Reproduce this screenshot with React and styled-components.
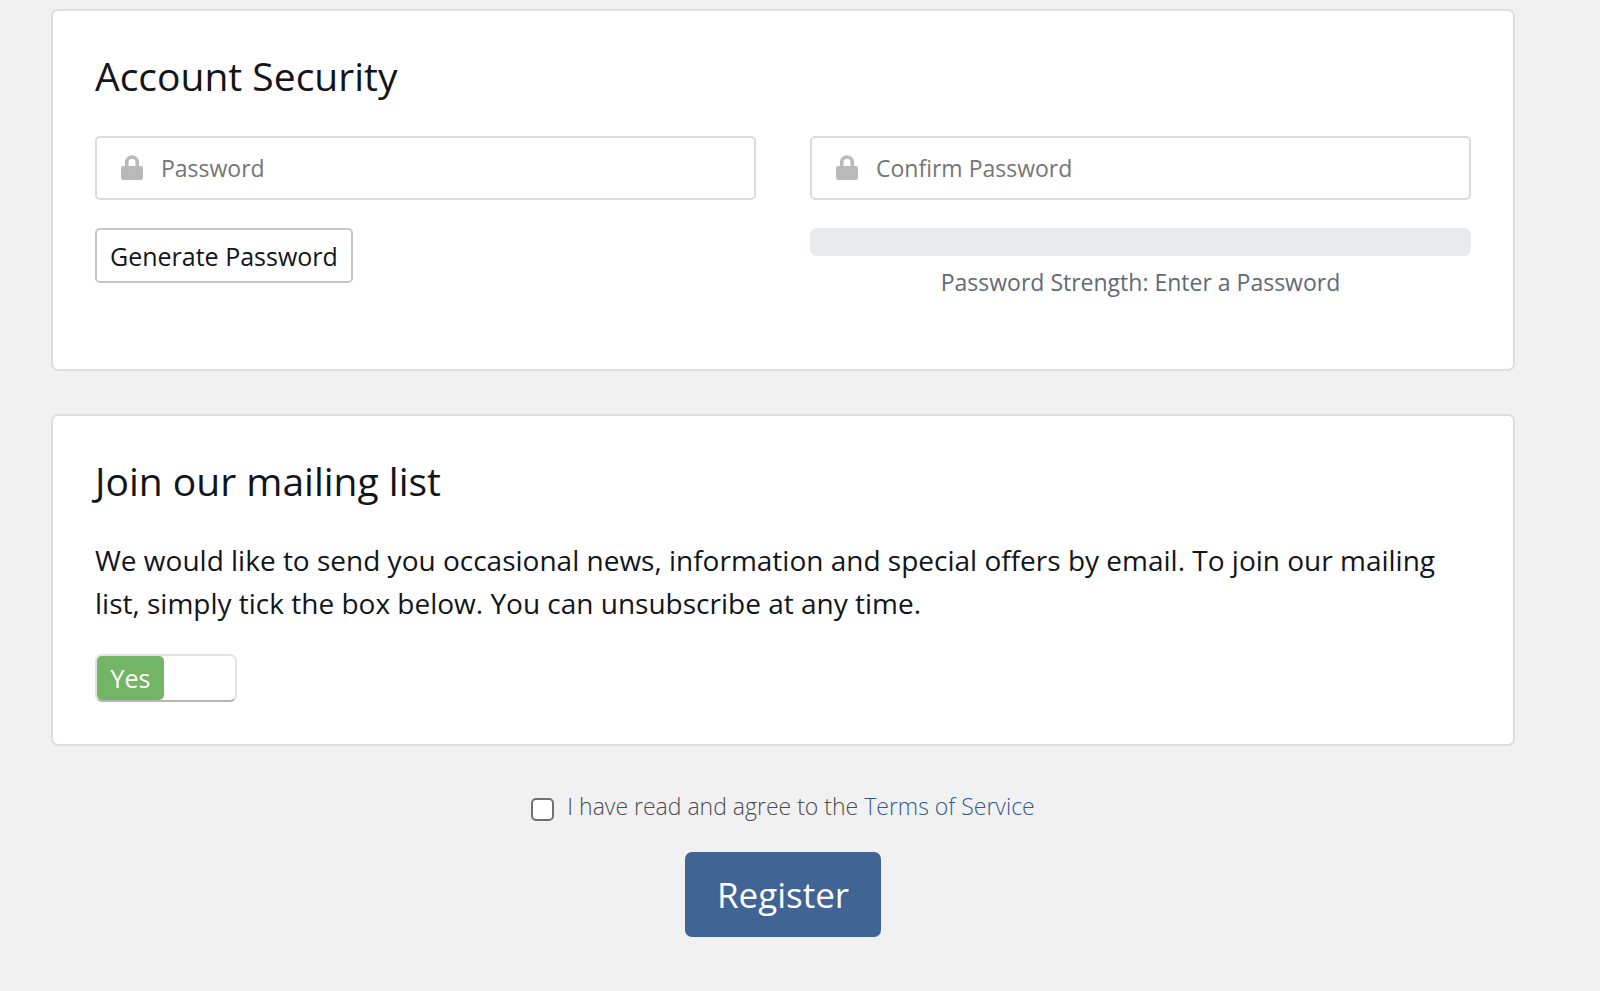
import React, { useState } from 'react';
import styled, { createGlobalStyle } from 'styled-components';

const GlobalStyle = createGlobalStyle`
  * {
    box-sizing: border-box;
  }

  body {
    margin: 0;
    background-color: #f1f1f1;
    color: #12151a;
    font-family: "Open Sans", "Noto Sans", sans-serif;
    font-size: 23px;
  }
`;

const Page = styled.form`
  padding: 9px 85px 52px 51px;
`;

const Card = styled.section`
  margin-bottom: 43px;
  padding: 42px 42px ${({ $bottom }) => $bottom};
  background-color: #fff;
  border: 2px solid #dedede;
  border-radius: 7px;
`;

const Title = styled.h2`
  margin: 0 0 35px;
  font-size: 39px;
  font-weight: 400;
  line-height: 46px;
`;

const Columns = styled.div`
  display: grid;
  grid-template-columns: 1fr 1fr;
  column-gap: 54px;
  row-gap: 28px;
  align-items: start;
  justify-items: start;
  padding-top: 2px;
`;

const Field = styled.label`
  display: flex;
  align-items: center;
  width: 100%;
  height: 64px;
  padding: 0 24px;
  border: 2px solid #dcdcdc;
  border-radius: 5px;
`;

const LockIcon = styled.svg`
  flex: none;
  width: 22px;
  height: 26px;
  margin-right: 18px;
  fill: #b9b9b9;
`;

const FieldInput = styled.input`
  flex: 1;
  min-width: 0;
  padding: 0;
  border: 0;
  outline: 0;
  background: transparent;
  color: #12151a;
  font: inherit;

  &::placeholder {
    color: #757575;
    opacity: 1;
  }
`;

const GenerateButton = styled.button`
  height: 55px;
  padding: 0 13px;
  background-color: #fff;
  border: 2px solid #c6c6c6;
  border-radius: 5px;
  color: #12151a;
  font-family: inherit;
  font-size: 25px;
  cursor: pointer;
`;

const Strength = styled.div`
  width: 100%;
  color: #626a73;
  text-align: center;
`;

const StrengthBar = styled.div`
  height: 28px;
  margin-bottom: 8px;
  background-color: #e9eaee;
  border-radius: 7px;
`;

const StrengthText = styled.p`
  margin: 0;
  line-height: 36px;
`;

const Text = styled.p`
  margin: 0 0 29px;
  font-size: 28px;
  line-height: 43px;
`;

const Toggle = styled.label`
  display: flex;
  justify-content: ${({ $on }) => ($on ? 'flex-start' : 'flex-end')};
  width: 142px;
  height: 48px;
  border: 2px solid #e2e2e2;
  border-bottom-color: #b5b5b5;
  border-radius: 7px;
  cursor: pointer;
`;

const ToggleInput = styled.input`
  width: 0;
  height: 0;
  margin: 0;
  appearance: none;
`;

const ToggleLabel = styled.span`
  width: 67px;
  background-color: ${({ $on }) => ($on ? '#72b566' : '#999')};
  border-radius: 5px;
  color: #fff;
  font-size: 25px;
  line-height: 44px;
  text-align: center;
`;

const Footer = styled.div`
  display: flex;
  flex-direction: column;
  align-items: center;
  gap: 28px;
`;

const Terms = styled.div`
  display: flex;
  align-items: center;
  gap: 13px;
  color: #4c4c4e;
  font-weight: 300;
  line-height: 35px;

  a {
    color: #315a90;
    text-decoration: none;
  }
`;

const Checkbox = styled.input`
  width: 23px;
  height: 23px;
  margin: 6px 0 0;
  background-color: #fff;
  border: 2px solid #707070;
  border-radius: 5px;
  appearance: none;

  &:checked {
    background-color: #3e6496;
  }
`;

const RegisterButton = styled.button`
  height: 85px;
  padding: 0 32px;
  background-color: #406494;
  border: 0;
  border-radius: 7px;
  color: #fff;
  font-family: inherit;
  font-size: 35px;
  cursor: pointer;
`;

function PasswordField({ name }) {
  return (
    <Field>
      <LockIcon viewBox="0 0 22 26" aria-hidden="true">
        <path
          fillRule="evenodd"
          d="M4 11V7.3a7 7 0 0 1 14 0V11h1.8a2.2 2.2 0 0 1 2.2 2.2v9.6a2.2 2.2 0 0 1-2.2 2.2H2.2A2.2 2.2 0 0 1 0 22.8v-9.6A2.2 2.2 0 0 1 2.2 11H4zM7.5 11h7V7.3a3.5 3.5 0 0 0-7 0V11z"
        />
      </LockIcon>
      <FieldInput type="password" placeholder={name} aria-label={name} />
    </Field>
  );
}

function App() {
  const [subscribed, setSubscribed] = useState(true);

  return (
    <>
      <GlobalStyle />
      <Page onSubmit={(e) => e.preventDefault()}>
        <Card $bottom="69px">
          <Title>Account Security</Title>
          <Columns>
            <PasswordField name="Password" />
            <PasswordField name="Confirm Password" />
            <GenerateButton type="button">Generate Password</GenerateButton>
            <Strength>
              <StrengthBar />
              <StrengthText>Password Strength: Enter a Password</StrengthText>
            </Strength>
          </Columns>
        </Card>

        <Card $bottom="42px">
          <Title>Join our mailing list</Title>
          <Text>
            We would like to send you occasional news, information and special offers by email. To join our mailing
            list, simply tick the box below. You can unsubscribe at any time.
          </Text>
          <Toggle $on={subscribed}>
            <ToggleInput
              type="checkbox"
              checked={subscribed}
              onChange={(e) => setSubscribed(e.target.checked)}
            />
            <ToggleLabel $on={subscribed}>{subscribed ? 'Yes' : 'No'}</ToggleLabel>
          </Toggle>
        </Card>

        <Footer>
          <Terms>
            <Checkbox type="checkbox" id="accept" />
            <label htmlFor="accept">
              I have read and agree to the <a href="#terms">Terms of Service</a>
            </label>
          </Terms>
          <RegisterButton type="submit">Register</RegisterButton>
        </Footer>
      </Page>
    </>
  );
}

export default App;
